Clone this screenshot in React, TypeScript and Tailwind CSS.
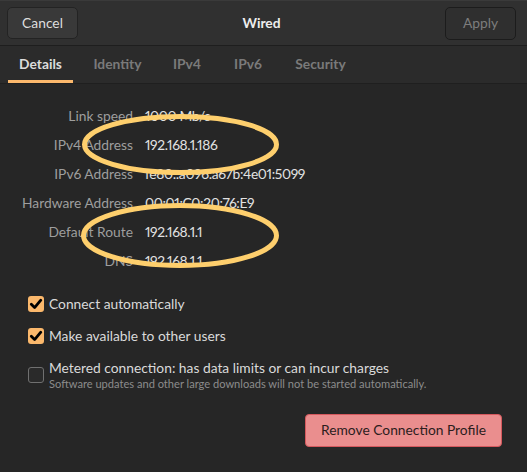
import React from "react";

function Check({ checked }: { checked: boolean }) {
  if (checked) {
    return (
      <div className="w-[16px] h-[16px] rounded-[3px] bg-[#fbb86c] flex items-center justify-center shrink-0">
        <svg width="14" height="14" viewBox="0 0 14 14">
          <path d="M2.3 7.3 L5.6 10.6 L11.8 3.2" fill="none" stroke="#000" strokeWidth="2.8" strokeLinecap="round" strokeLinejoin="round" />
        </svg>
      </div>
    );
  }
  return <div className="w-[16px] h-[16px] rounded-[3px] border border-[#707070] bg-[#2a2a2a] shrink-0" />;
}

const rows: [string, string][] = [
  ["Link speed", "1000 Mb/s"],
  ["IPv4 Address", "192.168.1.186"],
  ["IPv6 Address", "fe80::a096:a67b:4e01:5099"],
  ["Hardware Address", "00:01:C0:20:76:E9"],
  ["Default Route", "192.168.1.1"],
  ["DNS", "192.168.1.1"],
];

export default function App() {
  return (
    <div className="relative w-[527px] h-[472px] bg-[#262626] overflow-hidden text-[13.8px] font-['Lato','Noto_Sans',sans-serif] proportional-nums">
      {/* header */}
      <div className="h-[46px] bg-[#303030] border-b border-[#1e1e1e] border-t border-t-[#3a3a3a] flex items-center pl-[7px] pr-[11px]">
        <div className="w-[71px] h-[32px] rounded-[5px] bg-[#393939] border border-[#232323] flex items-center justify-center text-[#dedede]">
          Cancel
        </div>
        <div className="flex-1 text-center font-bold text-[#ededed]">Wired</div>
        <div className="w-[71px] h-[33px] rounded-[5px] bg-[#2f2f2f] border border-[#1c1c1c] flex items-center justify-center text-[#7d7d7d]">
          Apply
        </div>
      </div>
      {/* tabs */}
      <div className="h-[38px] bg-[#2b2b2b] border-b border-[#1f1f1f] flex items-stretch pl-[8px] font-bold text-[#7a7a7a]">
        <div className="relative w-[65px] flex items-center justify-center text-[#dcdcdc]">
          Details
          <div className="absolute left-0 right-0 bottom-0 h-[3px] bg-[#fbb86c]" />
        </div>
        <div className="w-[71px] ml-[9px] flex items-center justify-center">Identity</div>
        <div className="w-[50px] ml-[9px] flex items-center justify-center">IPv4</div>
        <div className="w-[50px] ml-[11px] flex items-center justify-center">IPv6</div>
        <div className="w-[73px] ml-[11px] flex items-center justify-center">Security</div>
      </div>
      {/* details */}
      <div className="pt-[18px] grid grid-cols-[133px_1fr] gap-x-[12px]">
        {rows.map(([k, v]) => (
          <React.Fragment key={k}>
            <div className="h-[29px] flex items-center justify-end text-[#9e9e9e] whitespace-nowrap">{k}</div>
            <div className="h-[29px] flex items-center text-[#e2e2e2] whitespace-nowrap tracking-[-0.35px]">{v}</div>
          </React.Fragment>
        ))}
      </div>
      {/* checkboxes */}
      <div className="pl-[28px] mt-[16px] text-[#dadada]">
        <div className="h-[24px] flex items-center gap-[5px]">
          <Check checked />
          <span>Connect automatically</span>
        </div>
        <div className="h-[24px] mt-[8px] flex items-center gap-[5px]">
          <Check checked />
          <span>Make available to other users</span>
        </div>
        <div className="mt-[11px] flex items-start gap-[5px]">
          <div className="mt-[8px]">
            <Check checked={false} />
          </div>
          <div>
            <div className="leading-[18px]">Metered connection: has data limits or can incur charges</div>
            <div className="leading-[14px] text-[11.1px] text-[#8c8c8c]">
              Software updates and other large downloads will not be started automatically.
            </div>
          </div>
        </div>
      </div>
      <div className="flex justify-end pr-[25px] mt-[23px]">
        <div className="w-[197px] h-[33px] rounded-[4px] bg-[#ea8e8e] border border-[#d5585d] flex items-center justify-center text-[#2b1d1d]">
          Remove Connection Profile
        </div>
      </div>
      {/* annotation ellipses */}
      <svg className="absolute inset-0 pointer-events-none" width="527" height="472">
        <ellipse cx="180.5" cy="144.5" rx="96" ry="28" fill="none" stroke="#fecf6d" strokeWidth="5" />
        <ellipse cx="180" cy="235.5" rx="96.5" ry="30" fill="none" stroke="#fecf6d" strokeWidth="5" />
      </svg>
    </div>
  );
}
